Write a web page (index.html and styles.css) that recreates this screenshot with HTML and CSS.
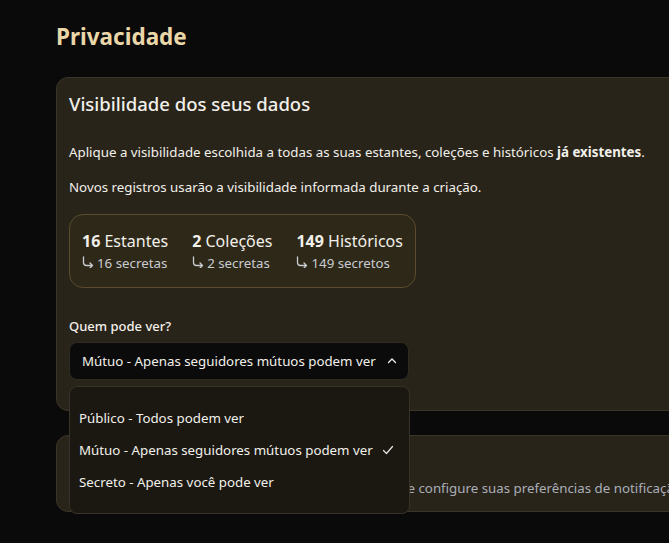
FILE: index.html
```html
<!DOCTYPE html>
<html>
  <head>
    <meta charset="UTF-8">
    <title>Privacidade</title>
    <link rel="stylesheet" href="styles.css">
  </head>
  <body>
    <main class="page">
      <h1 class="page-title">Privacidade</h1>

      <section class="card">
        <h2 class="card-title">Visibilidade dos seus dados</h2>
        <p class="card-text">Aplique a visibilidade escolhida a todas as suas estantes, coleções e históricos <strong>já existentes</strong>.</p>
        <p class="card-text">Novos registros usarão a visibilidade informada durante a criação.</p>

        <div class="stats">
          <div class="stat">
            <div class="stat-main"><b>16</b> Estantes</div>
            <div class="stat-sub"><svg class="arrow" width="12" height="12" viewBox="0 0 12 12"><path d="M1.5 1v5.5q0 3 3 3h6M8 7l2.5 2.5L8 12" fill="none" stroke="#c9ccd1" stroke-width="1.3" stroke-linecap="round" stroke-linejoin="round"/></svg>16 secretas</div>
          </div>
          <div class="stat">
            <div class="stat-main"><b>2</b> Coleções</div>
            <div class="stat-sub"><svg class="arrow" width="12" height="12" viewBox="0 0 12 12"><path d="M1.5 1v5.5q0 3 3 3h6M8 7l2.5 2.5L8 12" fill="none" stroke="#c9ccd1" stroke-width="1.3" stroke-linecap="round" stroke-linejoin="round"/></svg>2 secretas</div>
          </div>
          <div class="stat">
            <div class="stat-main"><b>149</b> Históricos</div>
            <div class="stat-sub"><svg class="arrow" width="12" height="12" viewBox="0 0 12 12"><path d="M1.5 1v5.5q0 3 3 3h6M8 7l2.5 2.5L8 12" fill="none" stroke="#c9ccd1" stroke-width="1.3" stroke-linecap="round" stroke-linejoin="round"/></svg>149 secretos</div>
          </div>
        </div>

        <label class="field-label">Quem pode ver?</label>
        <div class="select-wrap">
          <button type="button" class="select">
            <span>Mútuo - Apenas seguidores mútuos podem ver</span>
            <svg class="chevron" width="12" height="12" viewBox="0 0 12 12"><path d="M2.5 7.5 6 4l3.5 3.5" fill="none" stroke="#e8e8e8" stroke-width="1.4" stroke-linecap="round" stroke-linejoin="round"/></svg>
          </button>
          <ul class="menu">
            <li class="menu-item">Público - Todos podem ver</li>
            <li class="menu-item">Mútuo - Apenas seguidores mútuos podem ver
              <svg class="check" width="14" height="14" viewBox="0 0 14 14"><path d="M2.5 7.5 5.5 10.5 11.5 3.5" fill="none" stroke="#e8e8e8" stroke-width="1.2" stroke-linecap="round" stroke-linejoin="round"/></svg>
            </li>
            <li class="menu-item">Secreto - Apenas você pode ver</li>
          </ul>
        </div>
      </section>

      <section class="card card-small">
        <h2 class="card-title">Notificações</h2>
        <p class="card-text muted">Defina como você deseja ser avisado sobre atividades e configure suas preferências de notificação.</p>
      </section>
    </main>
  </body>
</html>
```

FILE: styles.css
```css
html, body {
  margin: 0;
  background-color: #0a0a0a;
  overflow: hidden;
}
body {
  font-family: "Noto Sans", sans-serif;
  color: #f2f0ea;
}
.page {
  width: 760px;
  padding: 21px 0 40px 56px;
}
.page-title {
  margin: 0 0 24px 0;
  font-size: 22.5px;
  line-height: 32px;
  font-weight: 700;
  color: #ead7a9;
}
.card {
  background-color: #29241a;
  border: 1px solid #3b3528;
  border-radius: 12px;
  padding: 12px 12px 30px 12px;
}
.card-title {
  margin: 0 0 24px 0;
  font-size: 18.5px;
  line-height: 28px;
  font-weight: 500;
}
.card-text {
  margin: 0 0 14px 0;
  font-size: 13.3px;
  line-height: 21px;
  white-space: nowrap;
}
.card-text strong {
  font-weight: 700;
}
.muted {
  color: #a9afb8;
}
.stats {
  display: inline-flex;
  gap: 24px;
  margin-top: 2px;
  padding: 14px 12px 14px 12px;
  border: 1px solid #5a4c2c;
  border-radius: 14px;
  background-color: #2e2819;
}
.stat-main {
  font-size: 16px;
  line-height: 24px;
}
.stat-main b {
  font-weight: 700;
}
.stat-sub {
  display: flex;
  align-items: center;
  gap: 3px;
  font-size: 13.3px;
  line-height: 20px;
  color: #c9ccd1;
}
.arrow {
  margin-top: -2px;
}
.field-label {
  display: block;
  margin-top: 28px;
  margin-bottom: 6px;
  font-size: 13px;
  line-height: 20px;
  font-weight: 500;
}
.select-wrap {
  position: relative;
  width: 340px;
}
.select {
  display: flex;
  align-items: center;
  justify-content: space-between;
  width: 340px;
  height: 38px;
  padding: 0 12px 0 12px;
  background-color: #0b0b0b;
  border: 1px solid #2f2b22;
  border-radius: 8px;
  color: #f2f0ea;
  font-family: inherit;
  font-size: 13.3px;
  cursor: pointer;
}
.chevron {
  margin-right: -2px;
}
.menu {
  position: absolute;
  top: 44px;
  left: 0;
  width: 341px;
  box-sizing: border-box;
  margin: 0;
  padding: 15px 10px 15px 9px;
  list-style: none;
  background-color: #1b1812;
  border: 1px solid #38332a;
  border-radius: 8px;
  z-index: 2;
}
.menu-item {
  display: flex;
  align-items: center;
  justify-content: space-between;
  height: 32px;
  font-size: 13.3px;
}
.check {
  margin-right: 4px;
}
.card-small {
  margin-top: 24px;
  padding-bottom: 12px;
}
.card-small .card-title {
  margin-bottom: 2px;
}
.card-small .card-text {
  margin: 0;
}
```
